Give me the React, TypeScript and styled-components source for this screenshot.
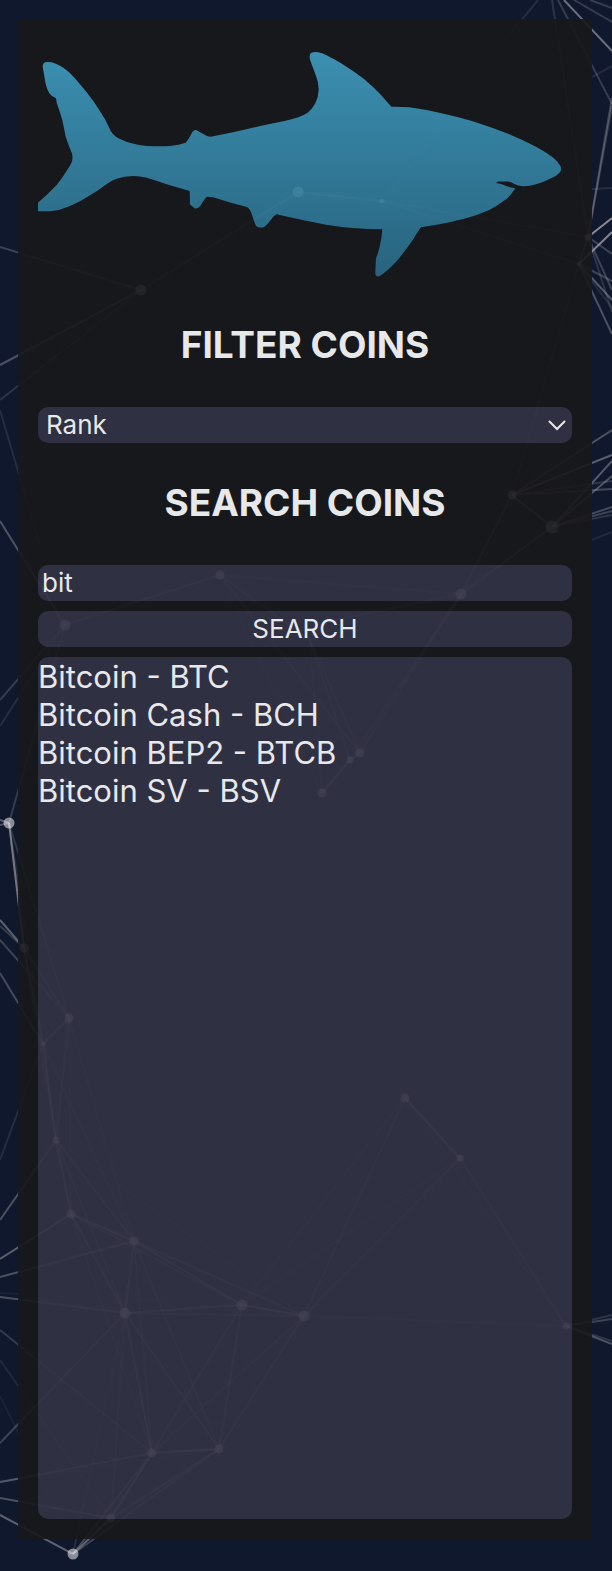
import React, { useState } from "react";
import styled, { createGlobalStyle, css } from "styled-components";

const GlobalStyle = createGlobalStyle`
  *, *::before, *::after { box-sizing: border-box; }
  body {
    margin: 0;
    background: #0f182c;
    color: #fff;
    font-family: Inter, "Liberation Sans", sans-serif;
  }
`;

const Page = styled.div`
  position: relative;
  display: flex;
  min-height: 100vh;
  padding: 19px 20px 32px 18px;
`;

const Backdrop = styled.svg`
  position: absolute;
  inset: 0;
  width: 100%;
  height: 100%;
  pointer-events: none;
`;

const Panel = styled.aside`
  position: relative;
  flex: 1;
  min-width: 0;
  display: flex;
  flex-direction: column;
  padding: 20px;
  background: #18181b;
  opacity: 0.9;
`;

const Logo = styled.svg`
  display: block;
  width: 100%;
  height: auto;
`;

const Heading = styled.h3`
  margin: 38px 0 40px;
  font-size: 37px;
  line-height: 44px;
  font-weight: 700;
  text-align: center;
`;

const field = css`
  width: 100%;
  height: 36px;
  border: 0;
  border-radius: 10px;
  outline: 0;
  background: #343346;
  color: #fff;
  font-family: inherit;
  font-size: 26px;
  line-height: 36px;
`;

const SelectBox = styled.div`
  position: relative;
`;

const Select = styled.select`
  ${field}
  display: block;
  appearance: none;
  padding: 0 32px 0 8px;
`;

const Chevron = styled.svg`
  position: absolute;
  top: 13px;
  right: 6px;
  width: 18px;
  height: 11px;
  pointer-events: none;
`;

const SearchForm = styled.form`
  display: flex;
  flex-direction: column;
  gap: 10px;
  margin-bottom: 10px;
`;

const SearchInput = styled.input`
  ${field}
  padding: 0 4px;
`;

const SearchButton = styled.button`
  ${field}
  padding: 0;
  text-align: center;
  cursor: pointer;
`;

const Results = styled.ul`
  flex: 1;
  margin: 0;
  padding: 1px 0;
  list-style: none;
  border-radius: 10px;
  background: #343346;
  font-size: 31px;
  line-height: 38px;
`;

const Result = styled.li`
  cursor: pointer;
`;

/* x, y, radius */
const nodes: Record<string, [number, number, number]> = {
  A: [141, 290, 5], B: [298, 192, 5], C: [382, 201, 2], D: [588, 237, 3],
  E: [579, 264, 2], F: [512, 495, 4], G: [552, 527, 6], H: [461, 594, 5],
  I: [220, 575, 4], J: [65, 625, 5], K: [360, 753, 4], L: [350, 760, 3],
  M: [322, 793, 4], N: [9, 823, 5], O: [24, 948, 4], P: [69, 1018, 4],
  Q: [43, 1044, 2], R: [56, 1140, 3], S: [71, 1214, 4], T: [134, 1241, 4],
  U: [125, 1313, 5], V: [242, 1305, 5], W: [304, 1316, 5], X: [152, 1453, 4],
  Y: [219, 1449, 4], Z: [111, 1518, 4], a: [73, 1554, 5], b: [405, 1098, 4],
  c: [460, 1158, 3], d: [566, 1326, 3],
};

/* pairs of connected nodes, with the strength of the link */
const links: [string, number][] = [
  ["AB", 0.25], ["BC", 0.35], ["CD", 0.15], ["CE", 0.15], ["DE", 0.45],
  ["EF", 0.15], ["FG", 0.45], ["FH", 0.3], ["GH", 0.35], ["HI", 0.15],
  ["HK", 0.25], ["HL", 0.2], ["IJ", 0.3], ["IK", 0.2], ["KL", 0.5],
  ["LM", 0.5], ["NO", 0.3], ["OP", 0.3], ["OQ", 0.35], ["PQ", 0.45],
  ["PR", 0.3], ["QR", 0.45], ["OR", 0.2], ["RS", 0.45], ["PS", 0.15],
  ["PT", 0.15], ["QT", 0.15], ["RT", 0.3], ["ST", 0.45], ["SU", 0.35],
  ["RU", 0.2], ["TU", 0.4], ["TV", 0.35], ["TW", 0.3], ["SV", 0.2],
  ["UV", 0.4], ["UW", 0.25], ["VW", 0.5], ["RW", 0.1], ["UX", 0.4],
  ["UY", 0.3], ["VX", 0.3], ["VY", 0.3], ["WX", 0.2], ["WY", 0.3],
  ["TX", 0.2], ["SX", 0.15], ["TY", 0.2], ["XY", 0.5], ["XZ", 0.5],
  ["YZ", 0.35], ["UZ", 0.2], ["Ua", 0.15], ["Za", 0.5], ["Xa", 0.35],
  ["Ya", 0.3], ["bc", 0.45], ["bd", 0.1], ["cd", 0.25], ["bV", 0.12],
  ["bW", 0.2], ["cW", 0.25], ["cV", 0.12], ["Wd", 0.15],
];

/* links that leave the page: x1, y1, x2, y2, strength */
const edges: [number, number, number, number, number][] = [
  [538, 0, 510, 34, 0.15], [552, 0, 588, 237, 0.2], [558, 0, 612, 104, 0.25],
  [564, 0, 612, 51, 0.6], [574, 0, 612, 22, 0.25], [590, 0, 612, 8, 0.25],
  [592, 77, 612, 66, 0.12], [612, 98, 588, 237, 0.35], [612, 106, 588, 237, 0.25],
  [592, 189, 612, 188, 0.15], [588, 237, 612, 218, 0.8], [579, 264, 612, 232, 0.75],
  [588, 237, 612, 254, 0.3], [588, 237, 612, 290, 0.3], [588, 237, 612, 312, 0.2],
  [579, 264, 612, 281, 0.3], [579, 264, 612, 300, 0.45], [579, 264, 612, 334, 0.4],
  [579, 264, 612, 308, 0.15], [512, 495, 612, 430, 0.4], [512, 495, 612, 455, 0.5],
  [512, 495, 612, 489, 0.35], [512, 495, 612, 481, 0.2], [552, 527, 612, 461, 0.45],
  [552, 527, 612, 476, 0.4], [552, 527, 612, 507, 0.35], [552, 527, 612, 511, 0.3],
  [552, 527, 612, 515, 0.2], [592, 540, 612, 532, 0.12], [566, 1326, 612, 1315, 0.2],
  [566, 1326, 612, 1319, 0.3], [566, 1326, 612, 1341, 0.2], [566, 1326, 612, 1344, 0.4],
  [0, 247, 141, 290, 0.3], [0, 365, 141, 290, 0.4], [0, 400, 141, 290, 0.2],
  [0, 410, 40, 546, 0.15], [0, 521, 65, 625, 0.4], [0, 700, 65, 625, 0.25],
  [0, 726, 65, 625, 0.15], [9, 823, 65, 625, 0.25], [0, 820, 9, 823, 0.5],
  [0, 825, 9, 823, 0.4], [9, 823, 43, 1044, 0.15], [9, 823, 24, 948, 0.5],
  [9, 823, 69, 1018, 0.2], [0, 920, 24, 948, 0.5], [0, 926, 24, 948, 0.25],
  [0, 940, 69, 1018, 0.3], [0, 973, 43, 1044, 0.35], [0, 1160, 43, 1044, 0.15],
  [0, 1220, 56, 1140, 0.4], [0, 1259, 71, 1214, 0.5], [0, 1277, 134, 1241, 0.4],
  [0, 1297, 125, 1313, 0.4], [0, 1293, 242, 1305, 0.08], [0, 1330, 152, 1453, 0.25],
  [0, 1360, 111, 1518, 0.12], [0, 1396, 60, 1517, 0.08], [0, 1443, 125, 1313, 0.3],
  [0, 1482, 152, 1453, 0.4], [0, 1482, 219, 1449, 0.1], [0, 1498, 111, 1518, 0.4],
  [0, 1515, 73, 1554, 0.5], [382, 201, 440, 128, 0.08], [220, 575, 322, 793, 0.1],
  [310, 640, 322, 793, 0.15], [310, 640, 360, 753, 0.25], [310, 640, 350, 760, 0.25],
  [220, 575, 310, 640, 0.25], [461, 594, 310, 625, 0.25],
];

const Network = () => (
  <Backdrop viewBox="0 0 612 1571" preserveAspectRatio="xMidYMid slice" aria-hidden="true">
    <g stroke="#dcd6e0" strokeWidth="2" opacity="0.75">
      {links.map(([pair, strength]) => {
        const [from, to] = [nodes[pair[0]], nodes[pair[1]]];
        return (
          <line key={pair} x1={from[0]} y1={from[1]} x2={to[0]} y2={to[1]} strokeOpacity={strength} />
        );
      })}
      {edges.map(([x1, y1, x2, y2, strength], i) => (
        <line key={i} x1={x1} y1={y1} x2={x2} y2={y2} strokeOpacity={strength} />
      ))}
    </g>
    <g fill="#fff" fillOpacity="0.5">
      {Object.entries(nodes).map(([name, [cx, cy, r]]) => (
        <circle key={name} cx={cx} cy={cy} r={r + 0.5} />
      ))}
    </g>
  </Backdrop>
);

const Shark = () => (
  <Logo viewBox="38 39 534 246" role="img" aria-label="Shark">
    <defs>
      <linearGradient id="shark" gradientUnits="userSpaceOnUse" x1="0" y1="52" x2="0" y2="276">
        <stop offset="0" stopColor="#419dc0" />
        <stop offset="1" stopColor="#2b6c88" />
      </linearGradient>
    </defs>
    <path
      fill="url(#shark)"
      d="M42.7 67Q42.500 62 47 62Q54 61.500 63.300 67.700Q71 73 78.300 82.300Q86 91 93.300 101
      Q100 111 105 119.300L111 131.500Q114 136 120 139Q126 142 131.700 143.300Q139 145.500 146.700 146
      Q160 146.700 170 146Q179 145 185.700 142.700Q189 139 191.500 133.500Q193.500 129.500 196 130
      L206 135.500Q208 137 212 136.500L233 132.300L260 126L283.300 121.300Q292 119.500 298.300 117.300
      Q304 115 307.700 112.700Q312.500 109 315.300 103.300Q318.500 97 318.700 89.300Q318.500 82 316 76
      L310.500 61Q308.500 55 311 53Q314 51.500 318 52.300Q322 53 326 55Q335 59.500 342.700 64.300
      Q355 72 364.300 79.300Q374 87.500 381 95L391.300 106.700Q401 106.500 409.300 107.300
      Q425 109.500 439.300 112.700Q457 116.500 472.700 121.300Q492 127.500 509.300 134.300
      Q524 140.500 536 146.700Q545 151.500 552.700 157.300Q558 161.500 560.300 165.700Q562 169.500 560 172.300
      Q557 176 551 178.300Q543 182.500 536 184.300Q529 186.500 522.700 186.300Q518 186 514.300 184
      Q511 181.500 507.700 181.500L498 181.500L496 183L502 184.300Q505 186 510 187.300L515.300 188.300
      Q511.500 194.500 506 199.300Q498 205.500 489.300 210Q478 215 466 218.300Q452 222 439.300 224.300
      L421 227.300Q417.500 232 412.700 240Q405 251 397.700 260Q390 268.500 384.300 272.700
      Q379.500 277 377 276.300Q375 276 375.300 272L376 258.300Q379 251 380 245Q382 237 382.300 229.300
      Q368 229.300 356 228.300Q340 227 326 224.700L306 220.700L276.300 214.300Q273 216.500 270 221
      Q266 226 264 227Q259 228.500 256 226Q253.500 220 252 215Q250 208.500 247 207L230 202.500L213.300 197.300
      L206.700 196.700Q204 199.500 201.500 204Q199 208.500 195 208.500L190 204.500L189.700 191L166.700 184.300
      Q156 180.500 146.700 177.700Q140 176.300 133.300 176Q124 176.300 116.700 178.700Q111 180.700 106.700 184
      Q99 190 90 195.300Q80 202 70 206Q60 210.500 50 211.300L38 211.300L38 202.700Q48 194 56.700 185
      Q62 178.500 66.700 170.700Q72.500 162.500 72.300 159.300Q73 155 71.300 151.700Q68 144 65.700 136.700
      Q64 128 62.300 120Q59 109 56.700 102.700L56 98.300Q51 96 49.300 93.300Q45.500 86 45 80Z"
    />
  </Logo>
);

const coins = [
  { name: "Bitcoin", symbol: "BTC" },
  { name: "Bitcoin Cash", symbol: "BCH" },
  { name: "Bitcoin BEP2", symbol: "BTCB" },
  { name: "Bitcoin SV", symbol: "BSV" },
];

export default function App() {
  const [query, setQuery] = useState("bit");

  return (
    <>
      <GlobalStyle />
      <Page>
        <Network />
        <Panel>
          <Shark />
          <Heading id="filter-title">FILTER COINS</Heading>
          <SelectBox>
            <Select aria-labelledby="filter-title" defaultValue="rank">
              <option value="rank">Rank</option>
            </Select>
            <Chevron viewBox="0 0 18 11" aria-hidden="true">
              <path d="M1.500 1.500L9 9L16.500 1.500" fill="none" stroke="#fff" strokeWidth="2" strokeLinecap="round" />
            </Chevron>
          </SelectBox>
          <Heading id="search-title">SEARCH COINS</Heading>
          <SearchForm onSubmit={(event) => event.preventDefault()}>
            <SearchInput
              type="text"
              aria-labelledby="search-title"
              value={query}
              onChange={(event) => setQuery(event.target.value)}
            />
            <SearchButton type="submit">SEARCH</SearchButton>
          </SearchForm>
          <Results>
            {coins.map((coin) => (
              <Result key={coin.symbol}>
                {coin.name} - {coin.symbol}
              </Result>
            ))}
          </Results>
        </Panel>
      </Page>
    </>
  );
}
